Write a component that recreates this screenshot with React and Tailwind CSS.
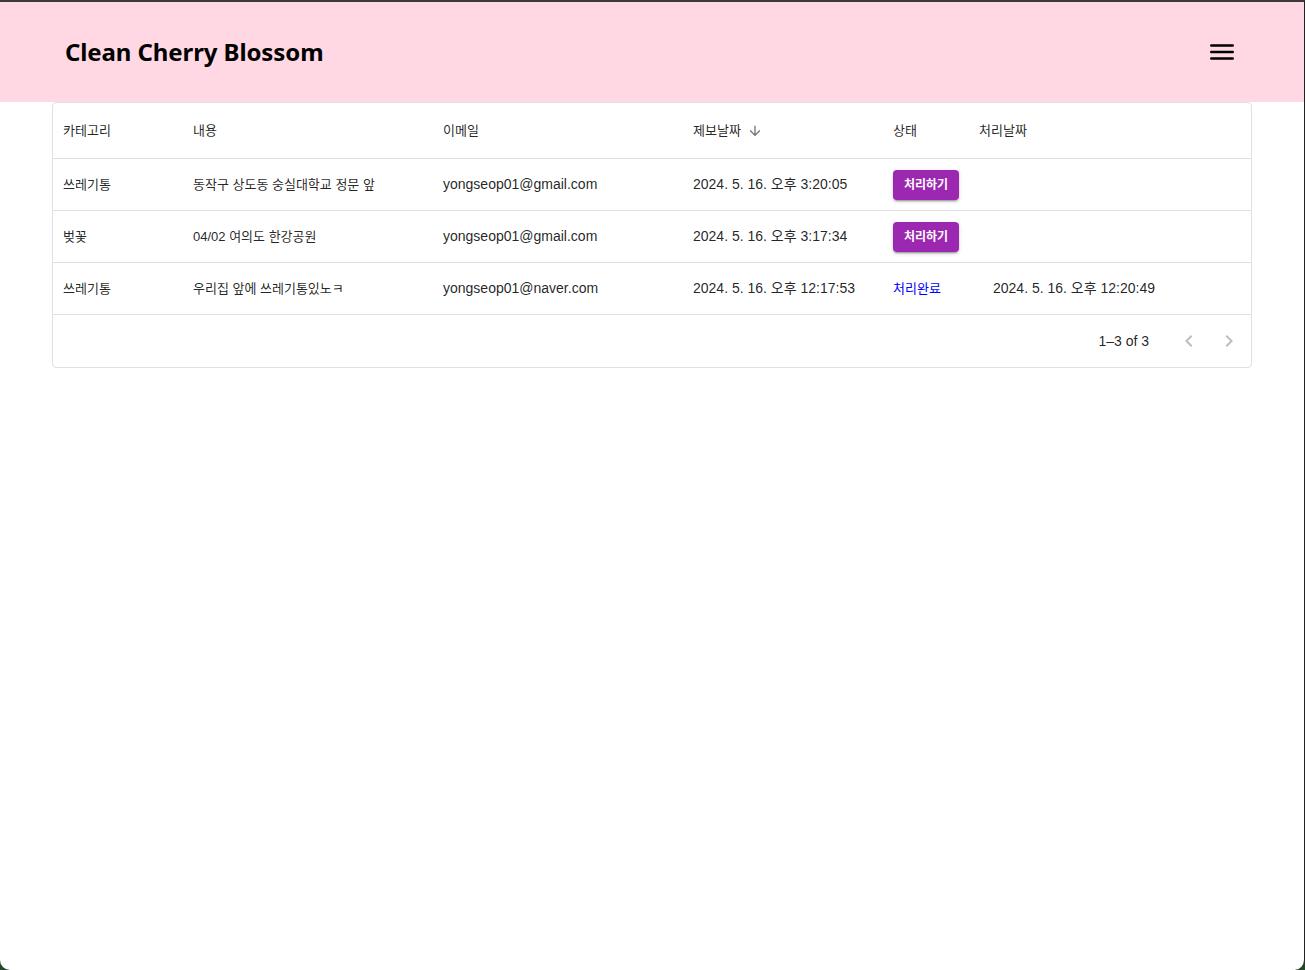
import React from "react"

const font = { fontFamily: '"Liberation Sans", "Noto Sans CJK KR", sans-serif' }

const rows = [
    { category: "쓰레기통", content: "동작구 상도동 숭실대학교 정문 앞", email: "yongseop01@gmail.com", reported: "2024. 5. 16. 오후 3:20:05", done: false, processed: "" },
    { category: "벚꽃", content: "04/02 여의도 한강공원", email: "yongseop01@gmail.com", reported: "2024. 5. 16. 오후 3:17:34", done: false, processed: "" },
    { category: "쓰레기통", content: "우리집 앞에 쓰레기통있노ㅋ", email: "yongseop01@naver.com", reported: "2024. 5. 16. 오후 12:17:53", done: true, processed: "2024. 5. 16. 오후 12:20:49" },
]

const Chevron = ({ dir }) => (
    <svg width="24" height="24" viewBox="0 0 24 24" className="text-[#bdbdbd]">
        {dir === "left" ? (
            <path d="M15.41 7.41 14 6l-6 6 6 6 1.41-1.41L10.83 12z" fill="currentColor" />
        ) : (
            <path d="M10 6 8.59 7.41 13.17 12l-4.58 4.59L10 18l6-6z" fill="currentColor" />
        )}
    </svg>
)

export default function App() {
    return (
        <div className="h-[970px] w-[1305px] bg-[#1f4a2a]">
            <div className="h-full w-full overflow-hidden rounded-b-[10px] border-t-2 border-r border-t-[#3a3a3a] border-r-[#222] bg-white" style={font}>
                {/* Header */}
                <header className="flex h-[100px] items-center justify-between bg-[#ffd8e4] pl-[65px] pr-[70px]">
                    <h1 className="text-[24px] font-bold tracking-[-0.1px] text-black" style={{ fontFamily: '"Noto Sans", sans-serif' }}>
                        Clean Cherry Blossom
                    </h1>
                    <svg width="24" height="18" viewBox="0 0 24 18">
                        <g stroke="#000" strokeWidth="2.6" strokeLinecap="round">
                            <line x1="1.3" y1="2.5" x2="22.7" y2="2.5" />
                            <line x1="1.3" y1="9" x2="22.7" y2="9" />
                            <line x1="1.3" y1="15.5" x2="22.7" y2="15.5" />
                        </g>
                    </svg>
                </header>

                {/* Table */}
                <div className="mx-[52px] rounded border border-[#e0e0e0] text-[14px] text-[rgba(0,0,0,0.87)]">
                    <div className="flex h-[56px] items-center border-b border-[#e0e0e0] text-[13px]">
                        <div className="w-[130px] px-[10px]">카테고리</div>
                        <div className="w-[250px] px-[10px]">내용</div>
                        <div className="w-[250px] px-[10px]">이메일</div>
                        <div className="flex w-[200px] items-center gap-[6px] px-[10px]">
                            제보날짜
                            <svg width="16" height="16" viewBox="0 0 24 24">
                                <path d="m20 12-1.41-1.41L13 16.17V4h-2v12.17l-5.58-5.59L4 12l8 8z" fill="#757575" />
                            </svg>
                        </div>
                        <div className="w-[86px] px-[10px]">상태</div>
                        <div className="flex-1 px-[10px]">처리날짜</div>
                    </div>
                    {rows.map((r, i) => (
                        <div key={i} className="flex h-[52px] items-center border-b border-[#e0e0e0]">
                            <div className="w-[130px] px-[10px] text-[13px]">{r.category}</div>
                            <div className="w-[250px] px-[10px] text-[13px]">{r.content}</div>
                            <div className="w-[250px] px-[10px]">{r.email}</div>
                            <div className="w-[200px] px-[10px]">{r.reported}</div>
                            <div className="w-[100px] px-[10px]">
                                {r.done ? (
                                    <span className="text-[13px] text-[#0000ff]">처리완료</span>
                                ) : (
                                    <button className="h-[30px] rounded bg-[#9c27b0] px-[11px] text-[12px] font-bold text-white shadow-[0_3px_1px_-2px_rgba(0,0,0,0.2),0_2px_2px_0_rgba(0,0,0,0.14),0_1px_5px_0_rgba(0,0,0,0.12)]">
                                        처리하기
                                    </button>
                                )}
                            </div>
                            <div className="flex-1 px-[10px]">{r.processed}</div>
                        </div>
                    ))}
                    <div className="flex h-[52px] items-center justify-end pr-[10px]">
                        <span className="mr-[28px] text-[14px]">1–3 of 3</span>
                        <div className="flex gap-[16px]">
                            <Chevron dir="left" />
                            <Chevron dir="right" />
                        </div>
                    </div>
                </div>
            </div>
        </div>
    )
}
